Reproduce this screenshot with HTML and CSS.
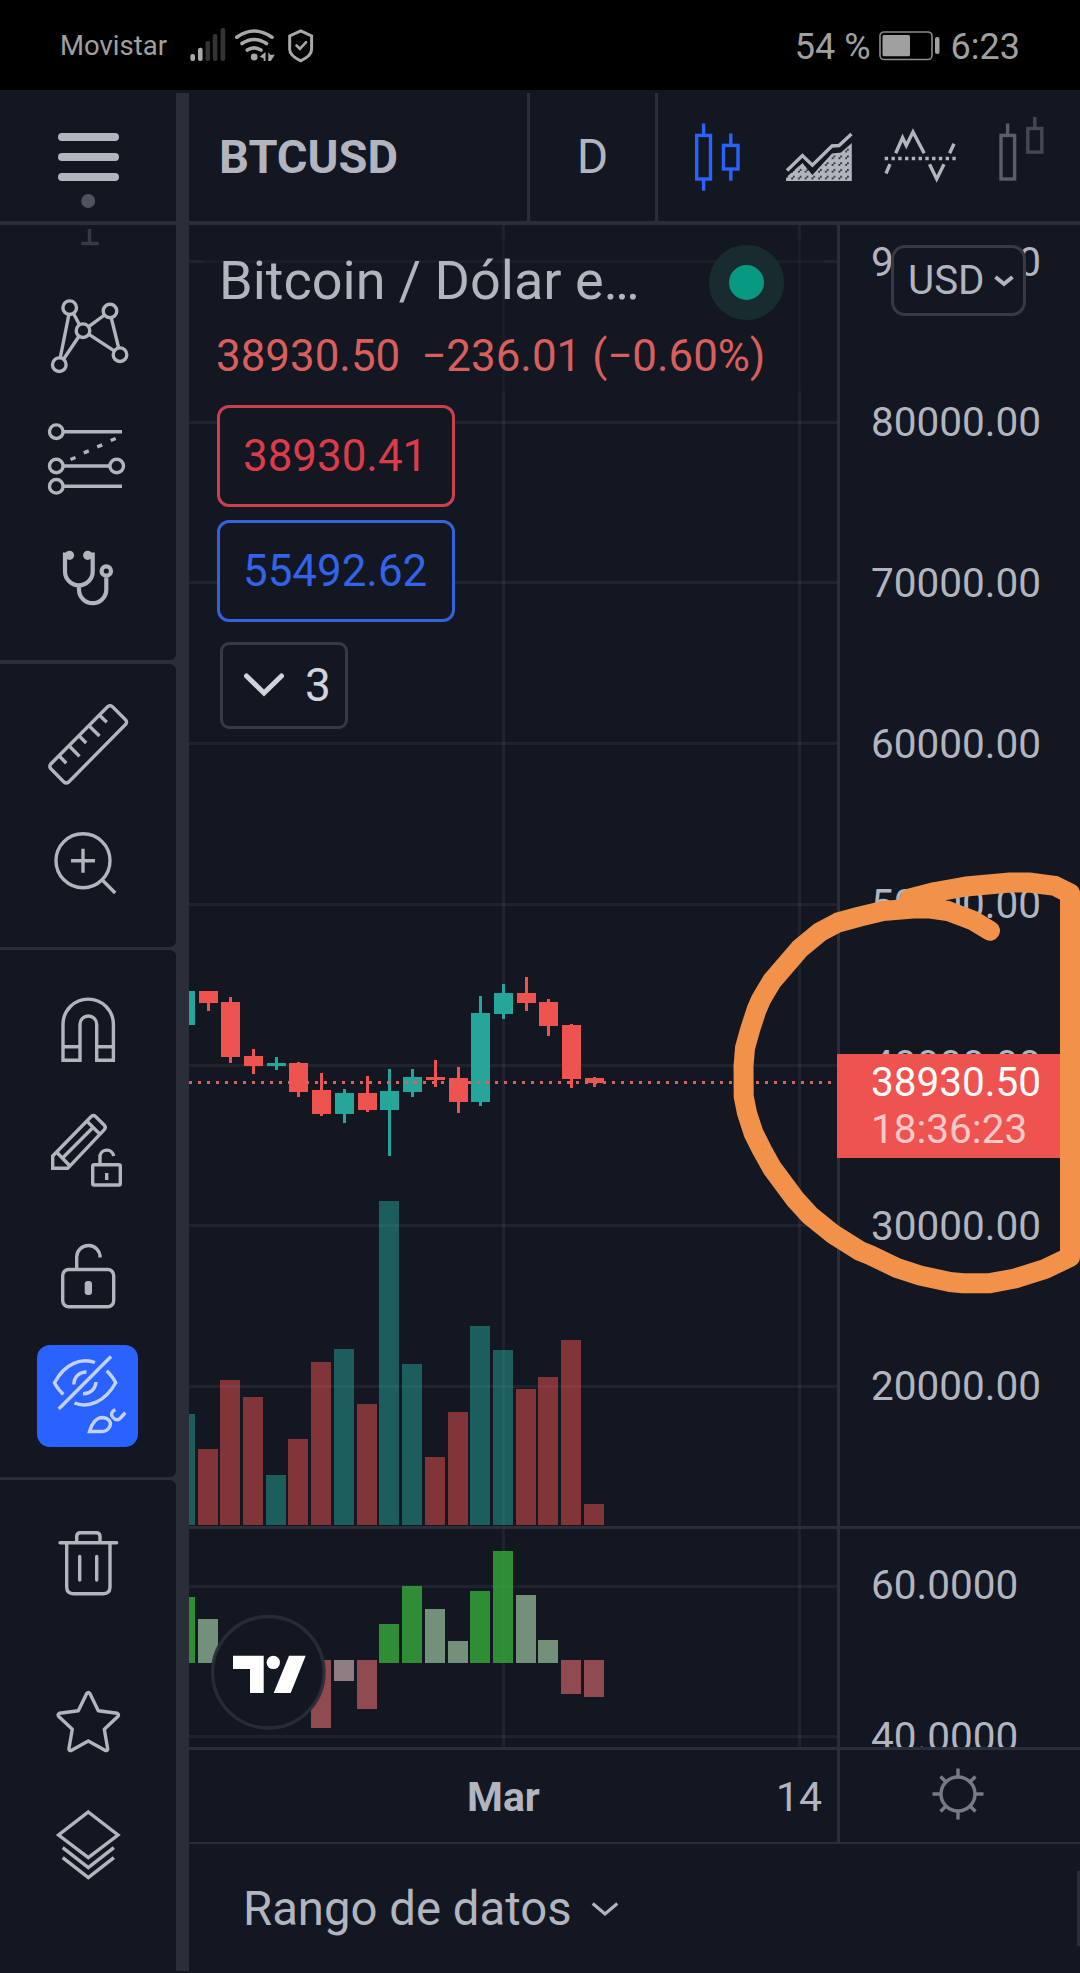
FILE: index.html
```html
<!DOCTYPE html>
<html lang="es">
<head>
    <meta charset="UTF-8">
    <meta name="viewport" content="width=device-width, initial-scale=1.0">
    <title>BTCUSD</title>
    <link rel="stylesheet" href="styles.css">
</head>
<body>
    <div class="status-bar">
        <span class="carrier">Movistar</span>
        <svg class="status-icons" width="126" height="36" viewBox="189 27 126 36">
            <rect x="190.4" y="54" width="4.6" height="7" rx="2" fill="#a8a8a8"/>
            <rect x="198" y="47.7" width="4.6" height="13.3" rx="2" fill="#a8a8a8"/>
            <rect x="205.5" y="41" width="4.6" height="20" rx="2" fill="#333"/>
            <rect x="212.8" y="34" width="4.6" height="27" rx="2" fill="#333"/>
            <rect x="220.6" y="28" width="4.6" height="33" rx="2" fill="#333"/>
            <g fill="none" stroke="#a8a8a8" stroke-width="3.6" stroke-linecap="round">
                <path d="M236.8 37.2Q254 24.8 272 37.2"/>
                <path d="M242 43.6Q254 35.4 266.5 43.6"/>
                <path d="M247.3 50Q254 45.6 261 50"/>
            </g>
            <circle cx="254.2" cy="57" r="3.4" fill="#a8a8a8"/>
            <path d="M265.5 52v9h-1.8v-2.5l-4-1.8zM268.3 52l2 2.8h4.5l-4 6.2h-2.5z" fill="#a8a8a8"/>
            <path d="M300.7 30.8L311.6 36v13.5c0 5.5-6 9-10.9 11.3C295.8 58.5 289.7 55 289.7 49.5V36z" fill="none" stroke="#a8a8a8" stroke-width="3"/>
            <path d="M296.5 45.5l3.4 3.3 6.2-6.6" fill="none" stroke="#a8a8a8" stroke-width="2.6" stroke-linecap="round"/>
        </svg>
        <span class="battery-level">54 %</span>
        <svg class="battery" width="61" height="30" viewBox="880 31 61 30">
            <rect x="881" y="32" width="52" height="27.5" rx="4" fill="none" stroke="#8d8d8d" stroke-width="1.6"/>
            <rect x="883.5" y="35" width="27.5" height="21.3" rx="1.5" fill="#a0a0a0"/>
            <rect x="936" y="37" width="4.5" height="17" rx="2" fill="#a0a0a0"/>
        </svg>
        <span class="clock">6:23</span>
    </div>

    <div class="app">
        <aside class="sidebar">
            <div class="menu">
                <svg width="176" height="128" viewBox="0 93 176 128">
                    <rect x="58" y="133" width="61" height="8" rx="4" fill="#b2b5be"/>
                    <rect x="58" y="153" width="61" height="8" rx="4" fill="#b2b5be"/>
                    <rect x="58" y="173" width="61" height="8" rx="4" fill="#b2b5be"/>
                    <circle cx="88.2" cy="201" r="7" fill="#50535e"/>
                </svg>
            </div>

            <div class="tools">
                <svg class="faded" width="176" height="55" viewBox="0 225 176 55">
                    <path d="M89.5 229v14M81.3 243.5h17.4"/>
                </svg>
                <svg width="176" height="120" viewBox="0 280 176 120">
                    <circle cx="69.7" cy="307.7" r="6.8"/>
                    <circle cx="110" cy="311" r="6.8"/>
                    <circle cx="83" cy="330.7" r="6.8"/>
                    <circle cx="59.3" cy="364.7" r="6.8"/>
                    <circle cx="120" cy="354.7" r="6.8"/>
                    <path d="M68.9 314.5L60.2 358M73.5 313.5l6 11.3M104.5 315L88.7 326.6M79 336.3L63.5 359.2M89 334.3l25.2 16.5M111.2 317.7l7.5 30.3"/>
                </svg>
                <svg width="176" height="120" viewBox="0 400 176 120">
                    <circle cx="56.3" cy="431.7" r="6.8"/>
                    <circle cx="56.3" cy="466" r="6.8"/>
                    <circle cx="116.7" cy="466" r="6.8"/>
                    <circle cx="56.3" cy="486.3" r="6.8"/>
                    <path d="M63 431.7h59M63 466h47M63 486.3h59"/>
                    <path d="M70.5 459.5l5-2M83.8 452.8l5-2M97.2 446.8l5-2M110.7 440.5l5-2"/>
                </svg>
                <svg width="176" height="140" viewBox="0 520 176 140">
                    <circle class="solid" cx="69.5" cy="555.3" r="4.6"/>
                    <circle class="solid" cx="87.7" cy="555.3" r="4.6"/>
                    <path class="thick" d="M69 554.5h-4v17a13.85 13.85 0 0 0 27.7 0v-17h-4M79 585.5v4a13.65 13.65 0 0 0 27.3 0v-12"/>
                    <circle class="thick" cx="106.3" cy="571" r="4.7"/>
                </svg>
            </div>

            <div class="tools">
                <svg width="176" height="136" viewBox="0 664 176 136">
                    <path d="M107.8 706.5q2.300-1.700 4.500 0l13.500 13.500q1.500 2 0 4.200L68.500 782.200q-2.200 1.700-4.400 0L50.600 768.500q-1.500-2.100 0-4.300z"/>
                    <path d="M59.3 756l7 7.300M69.300 746l10.200 10.400M79.300 736l6.900 7M89.300 726l10.200 10M99.800 715.500l7 6.700"/>
                </svg>
                <svg width="176" height="147" viewBox="0 800 176 147">
                    <circle cx="83" cy="860.7" r="27"/>
                    <path d="M71 860.7h24M83 848.7v24M102.300 880l12.900 13"/>
                </svg>
            </div>

            <div class="tools gap-small">
                <svg width="176" height="140" viewBox="0 950 176 140">
                    <path d="M63 1060.3v-36a25.2 25.2 0 0 1 50.4 0v36H96.7v-36a8.35 8.35 0 0 0-16.7 0v36zM63 1046.7h17M96.7 1046.7h16.7"/>
                </svg>
                <svg width="176" height="120" viewBox="0 1090 176 120">
                    <path d="M52.7 1168.3V1156l38.5-39.5q2.2-1.8 4.400 0l8.7 8.7q2 2.200 0 4.500l-36.600 38.600zM56.500 1152l13.700 14.300M63.300 1157.300l29.400-29.600M86.700 1121l13.300 13.300"/>
                    <rect x="92.7" y="1164.7" width="27.6" height="20.3" rx="1.5"/>
                    <path d="M100 1164v-8.5a7 7 0 0 1 13.700 0.500M106.700 1173v7"/>
                </svg>
                <svg width="176" height="135" viewBox="0 1210 176 135">
                    <rect x="62.7" y="1269.5" width="51" height="37.3" rx="6"/>
                    <path d="M76.7 1269v-12a11.7 11.7 0 0 1 23.4 0.5"/>
                    <rect class="solid" x="84.7" y="1281" width="7.3" height="14" rx="3"/>
                </svg>
                <button class="tool-active">
                    <svg width="101" height="102" viewBox="37 1345 101 102">
                        <path d="M63.3 1394.5Q57 1388 54.5 1382.700C65 1363 82 1357.500 95 1362.500M106.700 1370.700Q113 1377 115.700 1382.700C105 1402 88 1408.500 74.500 1403M111 1356.500L58.700 1409"/>
                        <path d="M73.8 1384.5C74 1377 79 1372 86.5 1372M96 1382C95.5 1389 90.5 1394 83 1393.8"/>
                        <path d="M89.5 1431.5C91.5 1424 96 1417.5 102.5 1417.5C109 1418 112 1422.5 109.5 1427Q107 1431.5 102 1431.5zM115.2 1409.5C111 1412 110.5 1414.5 113 1417.5C116 1421 118.5 1420 120.5 1418L125.3 1412.7"/>
                    </svg>
                </button>
            </div>

            <div class="tools gap-small last">
                <svg width="176" height="160" viewBox="0 1480 176 160">
                    <path stroke-linecap="round" d="M60 1542.7h56.7M76.7 1542v-5.5q0-3.8 3.8-3.8h15.7q3.8 0 3.8 3.8v5.5M66.7 1543v44q0 6.7 6.7 6.7h29.9q6.7 0 6.7-6.7v-44M79.7 1556.5v23.5M96.7 1556.5v23.5"/>
                </svg>
                <svg width="176" height="150" viewBox="0 1640 176 150">
                    <path stroke-linejoin="round" d="M86.7 1693.5q1.6-2 3.2 0l8.4 17.2 18.9 2.6q2 .9.9 2.9l-13.8 13.1 3.4 19.5q-.2 2.3-2.3 1.7L88.300 1741l-17.100 9.500q-2.100.6-2.300-1.700l3.400-19.500-13.800-13.100q-1.100-2 .9-2.900l18.900-2.600z"/>
                </svg>
                <svg width="176" height="181" viewBox="0 1790 176 181">
                    <path d="M88.3 1812l29.7 23-29.7 22.7L58.6 1835zM62.7 1847.700l25.600 20 25.600-20M62.700 1857.700l25.600 20 25.600-20"/>
                </svg>
            </div>
        </aside>

        <main class="main">
            <header class="toolbar">
                <div class="symbol">BTCUSD</div>
                <div class="interval">D</div>
                <svg class="toolbar-icons" width="422" height="128" viewBox="658 93 422 128">
                    <defs>
                        <pattern id="checker" x="786.2" y="177.6" width="6.76" height="6.76" patternUnits="userSpaceOnUse">
                            <rect width="3.4" height="3.4" fill="#b2b5be"/>
                            <rect x="3.38" y="3.38" width="3.4" height="3.4" fill="#b2b5be"/>
                        </pattern>
                    </defs>
                    <g stroke="#2962ff">
                        <rect x="696.7" y="135.4" width="13.8" height="43.6"/>
                        <rect x="723.5" y="145.4" width="14.5" height="23.6"/>
                        <path d="M703.6 123.5v12M703.6 179v11.7M730.8 133.5v12M730.8 169v11.7"/>
                    </g>
                    <path d="M787 170.5l15.4-15 10 9.7L832 146l7-.5 12.5-11.5"/>
                    <path d="M786 181v-3.5l16.5-14.5 9.9 12L832 153.5l9-1L851.8 143v38z" fill="url(#checker)" stroke="none"/>
                    <path d="M884.7 158.5h71" stroke-dasharray="3.4 3.37"/>
                    <path d="M895.7 153.3l6.900-15.600 3.700 7.800 6.700-13.500 11.200 21.300M929.500 164.200l7.200 14.800 7.300-14.800M886 173.500l4-9.300M949.600 153.300l4.400-9.600"/>
                    <g stroke="#5b5e68">
                        <rect x="1001" y="135.4" width="13.6" height="43.6"/>
                        <path d="M1007.6 123.5v12"/>
                    </g>
                    <g stroke="#454852">
                        <rect x="1027.8" y="128.5" width="14" height="23.6"/>
                        <path d="M1034.8 117v12"/>
                    </g>
                </svg>
            </header>

            <section class="chart">
                <div class="pane">
                    <svg id="price-pane" width="648" height="1301" viewBox="189 225 648 1301"></svg>
                    <div class="legend">
                        <div class="legend-head">
                            <div class="title-row">
                                <span class="title">Bitcoin / Dólar e…</span>
                                <span class="market-open"></span>
                            </div>
                            <div class="values"><span>38930.50</span><span>−236.01 (−0.60%)</span></div>
                        </div>
                        <div class="legend-buttons">
                            <button class="quote sell">38930.41</button>
                            <button class="quote buy">55492.62</button>
                            <button class="collapse">
                                <svg width="42" height="26" viewBox="0 0 42 26"><path d="M3.5 4l17.5 17L38.5 4"/></svg>
                                3
                            </button>
                        </div>
                    </div>
                </div>
                <div class="axis price-axis">
                    <ul class="prices">
                        <li>90000.00</li>
                        <li>80000.00</li>
                        <li>70000.00</li>
                        <li>60000.00</li>
                        <li>50000.00</li>
                        <li>40000.00</li>
                        <li>30000.00</li>
                        <li>20000.00</li>
                    </ul>
                    <button class="currency">
                        USD
                        <svg width="22" height="14" viewBox="0 0 22 14"><path d="M2.5 3l8.5 7 8.5-7"/></svg>
                    </button>
                    <div class="last-price">
                        <span>38930.50</span>
                        <span class="countdown">18:36:23</span>
                    </div>
                </div>

                <div class="pane pane-bottom">
                    <svg id="osc-pane" width="648" height="218" viewBox="189 1529 648 218"></svg>
                    <svg class="logo" width="116" height="116" viewBox="210 1614 116 116">
                        <circle cx="268.3" cy="1672.3" r="55.7" fill="#131722" stroke="#2a2e39" stroke-opacity=".9" stroke-width="3.5"/>
                        <g fill="#fff">
                            <path d="M233 1655.7h30.7v37.3H250v-24h-17zM289 1655.7h16.7L290.7 1693h-17z"/>
                            <circle cx="273.3" cy="1662.4" r="6.7"/>
                        </g>
                    </svg>
                </div>
                <div class="axis pane-bottom">
                    <ul class="prices osc">
                        <li>60.0000</li>
                        <li>40.0000</li>
                    </ul>
                </div>

                <div class="time-axis">
                    <span class="month">Mar</span>
                    <span class="day">14</span>
                </div>
                <div class="settings">
                    <svg width="54" height="54" viewBox="-27 -27 54 54">
                        <circle r="17"/>
                        <path d="M0-17v-8.5M0 17v8.5M-17 0h-8.5M17 0h8.5M-12-12l-5.5-5.5M12-12l5.5-5.5M-12 12l-5.5 5.5M12 12l5.5 5.5"/>
                    </svg>
                </div>
            </section>

            <footer class="range-bar">
                <span>Rango de datos</span>
                <svg width="30" height="18" viewBox="0 0 30 18"><path d="M2.7 3.5L15 14 27.3 3.5"/></svg>
                <i class="edge"></i>
            </footer>
        </main>
    </div>

    <!-- hand drawn marker -->
    <svg class="marker" width="400" height="480" viewBox="700 850 400 480">
        <path d="M990 930.7L973 920.5 948 911 930 908.5H913L883 911 860 916.5 838 922.5 820 932 800 948.5 772 981 761 999.5 756.5 1010 750 1030 745 1048 743.5 1066.5 743.7 1096.5 747 1113 753.5 1133 762 1150 772 1168 795 1199 810 1215.5 833 1234 860 1251 870 1255 897 1268 920 1275.5 950 1282 963 1283.2H990L1015 1278.5 1045 1269 1070 1257V893.5L1055 885.8 1029 882.5H1010L966 886.5 935 892 910 898.5"/>
    </svg>

    <script>
        // x, color, body top, body bottom, wick top, wick bottom, volume top
        const candles = [
            [176, "up", 991, 1025, 991, 1025, 1414],
            [199, "down", 991, 1003, 991, 1011, 1449],
            [221, "down", 1002, 1057, 997, 1063, 1380],
            [244, "down", 1056, 1066, 1049, 1074, 1397],
            [267, "up", 1063, 1066, 1057, 1070, 1475],
            [289, "down", 1063, 1092, 1062, 1097, 1439],
            [312, "down", 1090, 1114, 1073, 1116, 1362],
            [335, "up", 1093, 1114, 1089, 1123, 1349],
            [358, "down", 1093, 1110, 1076, 1112, 1404],
            [380, "up", 1091, 1110, 1069, 1156, 1201],
            [403, "up", 1077, 1092, 1069, 1097, 1364],
            [426, "down", 1077, 1080, 1060, 1087, 1457],
            [449, "down", 1078, 1102, 1067, 1113, 1412],
            [471, "up", 1013, 1102, 996, 1106, 1326],
            [494, "up", 993, 1014, 984, 1019, 1350],
            [517, "down", 993, 1003, 977, 1011, 1389],
            [539, "down", 1002, 1026, 999, 1036, 1377],
            [562, "down", 1025, 1079, 1024, 1088, 1340],
            [585, "down", 1078, 1083, 1077, 1087, 1504]
        ];

        // x, color, top, bottom
        const oscillator = [
            [175, "strong", 1597, 1663],
            [198, "weak", 1619, 1663],
            [311, "bear", 1660, 1728],
            [334, "bear-weak", 1660, 1681],
            [357, "bear", 1660, 1709],
            [379, "strong", 1624, 1663],
            [402, "strong", 1586, 1663],
            [425, "weak", 1609, 1663],
            [448, "weak", 1641, 1663],
            [470, "strong", 1591, 1663],
            [493, "strong", 1551, 1663],
            [516, "weak", 1595, 1663],
            [538, "weak", 1640, 1663],
            [561, "bear", 1660, 1694],
            [584, "bear", 1660, 1697]
        ];

        function rect(x, y, w, h, cls) {
            return `<rect class="${cls}" x="${x}" y="${y}" width="${w}" height="${h}"/>`;
        }

        function grid(rows, top, height) {
            let out = "";
            rows.forEach((y) => { out += rect(189, y, 648, 3, "grid"); });
            [502, 798].forEach((x) => { out += rect(x, top, 3, height, "grid"); });
            return out;
        }

        let price = grid([260, 421, 581, 742, 903, 1064, 1224, 1385], 225, 1301);
        candles.forEach(([x, dir, top, bottom, high, low, vol]) => {
            price += rect(x - 1, vol, 20, 1525 - vol, "vol-" + dir);
            price += rect(x + 8, high, 3, low - high, dir);
            price += rect(x, top, 19, bottom - top, dir);
        });
        price += `<path class="price-line" d="M189 1082.5H833"/>`;
        document.getElementById("price-pane").innerHTML = price;

        let osc = grid([1585, 1735], 1529, 218);
        oscillator.forEach(([x, cls, top, bottom]) => {
            osc += rect(x, top, 20, bottom - top, cls);
        });
        document.getElementById("osc-pane").innerHTML = osc;
    </script>
</body>
</html>
```
FILE: styles.css
```css
* {
    box-sizing: border-box;
}
body {
    margin: 0;
    width: 1080px;
    height: 1973px;
    overflow: hidden;
    position: relative;
    background-color: #131722;
    color: #b2b5be;
    font-family: Roboto, sans-serif;
}
svg {
    display: block;
    flex-shrink: 0;
}
button {
    display: flex;
    align-items: center;
    padding: 0;
    background-color: #131722;
    color: inherit;
    font-family: inherit;
    border: none;
}

/* phone status bar */
.status-bar {
    display: flex;
    align-items: center;
    height: 90px;
    padding: 0 60px;
    background-color: #000;
    color: #a0a0a0;
    font-size: 36px;
}
.carrier {
    width: 129px;
    padding-top: 1px;
    font-size: 27.5px;
}
.battery-level {
    margin-left: auto;
    padding-top: 3px;
    white-space: nowrap;
}
.battery {
    margin: 1px 11px 0 8px;
}
.clock {
    padding-top: 3px;
}

.app {
    display: flex;
    height: 1881px;
    padding-top: 3px;
}

/* drawing tools */
.sidebar {
    width: 189px;
    height: 1878px;
    padding-right: 13px;
    background-color: #2a2e39;
}
.menu {
    height: 128px;
    background-color: #131722;
}
.tools {
    margin-top: 4px;
    background-color: #131722;
    border-radius: 0 6px 6px 0;
}
.tools.gap-small {
    margin-top: 3px;
}
.tools:nth-child(2) {
    border-radius: 0 0 6px 0;
}
.tools:nth-child(4) {
    padding-bottom: 30px;
}
.tools.last {
    border-radius: 0 6px 0 0;
}
.tools svg {
    fill: none;
    stroke: #b2b5be;
    stroke-width: 3.4px;
}
.tools .faded {
    stroke: #363a45;
}
.tools .solid {
    fill: #b2b5be;
    stroke: none;
}
.tools .thick {
    stroke-width: 4.2px;
}
.tool-active {
    width: 101px;
    height: 102px;
    margin-left: 37px;
    border-radius: 13px;
    background-color: #2962ff;
}
.tools .tool-active svg {
    stroke: #c3d2ff;
}

.main {
    width: 891px;
}
.toolbar {
    display: flex;
    height: 132px;
    border-bottom: 4px solid #2a2e39;
    font-size: 48px;
    line-height: 127px;
}
.symbol {
    width: 341px;
    padding-left: 30px;
    border-right: 3px solid #2a2e39;
    font-size: 47px;
    font-weight: bold;
}
.interval {
    width: 128px;
    border-right: 3px solid #2a2e39;
    text-align: center;
}
.toolbar-icons {
    fill: none;
    stroke: #b2b5be;
    stroke-width: 3.4px;
}

/* chart panes and scales */
.chart {
    display: grid;
    grid-template-columns: 648px 243px;
    grid-template-rows: 1301px 221px 97px;
}
.pane, .axis {
    position: relative;
    overflow: hidden;
}
.axis, .settings {
    border-left: 3px solid #2a2e39;
}
.pane-bottom {
    border-top: 3px solid #2a2e39;
}
.grid {
    fill: #b2b5be;
    fill-opacity: 0.08;
}
.up {
    fill: #26a69a;
}
.down {
    fill: #ef5350;
}
.vol-up {
    fill: rgba(38, 166, 154, 0.5);
}
.vol-down {
    fill: rgba(239, 83, 80, 0.5);
}
.strong {
    fill: rgba(53, 163, 56, 0.85);
}
.weak {
    fill: rgba(133, 166, 138, 0.85);
}
.bear {
    fill: rgba(167, 85, 89, 0.85);
}
.bear-weak {
    fill: rgba(167, 143, 149, 0.85);
}
.price-line {
    stroke: #d9625f;
    stroke-width: 3px;
    stroke-dasharray: 3 6;
}
.logo {
    position: absolute;
    left: 21px;
    top: 85px;
}

/* legend lies over the price pane */
.legend {
    position: absolute;
    left: 14px;
    top: 14px;
}
.legend-head {
    width: 621px;
    height: 152px;
    padding-top: 6px;
    background-color: rgba(19, 23, 34, 0.5);
}
.title-row {
    display: flex;
    align-items: center;
    height: 75px;
    padding-left: 16px;
}
.title {
    width: 490px;
    font-size: 54px;
    padding-bottom: 4px;
}
.market-open {
    width: 75px;
    height: 75px;
    border: 20px solid #182c30;
    border-radius: 50%;
    background-color: #089981;
}
.values {
    display: flex;
    gap: 21px;
    padding-left: 13px;
    color: #d95f5c;
    font-size: 43.9px;
    line-height: 72px;
    white-space: nowrap;
}
.legend-buttons {
    width: 279px;
    padding: 14px 0 0 14px;
}
.quote {
    width: 238px;
    height: 102px;
    margin-bottom: 13px;
    padding: 0 0 1px 23px;
    border: 3px solid #c9414f;
    border-radius: 12px;
    color: #dc3c4a;
    font-size: 43.9px;
}
.buy {
    border-color: #3562d6;
    color: #3263ea;
}
.collapse {
    gap: 20px;
    width: 128px;
    height: 87px;
    margin: 20px 0 0 3px;
    padding: 0 0 2px 20px;
    border: 3px solid #363a45;
    border-radius: 9px;
    color: #d1d4dc;
    font-size: 46px;
}
.collapse svg {
    fill: none;
    stroke: #d1d4dc;
    stroke-width: 5px;
    stroke-linecap: round;
}

.prices {
    margin: -43.5px 0 0;
    padding: 0 0 0 31px;
    list-style: none;
    font-size: 40.5px;
}
.prices li {
    height: 160.7px;
    line-height: 160.7px;
}
.prices.osc {
    margin-top: -20px;
}
.prices.osc li {
    height: 152px;
    line-height: 152px;
}
/* inset line instead of a border, so the price tag can cover it */
.price-axis {
    padding-left: 3px;
    border-left: none;
    box-shadow: inset 3px 0 #2a2e39;
}
.currency {
    position: absolute;
    left: 54px;
    top: 20px;
    gap: 8px;
    width: 135px;
    height: 71px;
    padding-left: 14px;
    border: 3px solid #363a45;
    border-radius: 14px;
    font-size: 40.3px;
}
.currency svg {
    fill: none;
    stroke: #b2b5be;
    stroke-width: 4px;
}
.last-price {
    position: absolute;
    left: 0;
    top: 829px;
    width: 226px;
    height: 104px;
    padding: 5px 0 0 34px;
    border-radius: 0 3px 3px 0;
    background-color: #ef5350;
    color: #fff;
    font-size: 40.5px;
    line-height: 47px;
}
.last-price span {
    display: block;
}
.last-price .countdown {
    color: rgba(255, 255, 255, 0.7);
}

.time-axis, .settings {
    border-top: 3px solid #2a2e39;
    border-bottom: 2px solid #2a2e39;
}
.time-axis {
    display: flex;
    font-size: 41px;
    line-height: 94px;
}
.month {
    width: 40px;
    margin-left: 278px;
    font-weight: bold;
}
.day {
    margin-left: 269px;
}
.settings {
    padding: 17px 0 0 91px;
}
.settings svg {
    fill: none;
    stroke: #787b86;
    stroke-width: 3.4px;
}

.range-bar {
    display: flex;
    align-items: center;
    height: 129px;
    padding-left: 54px;
    font-size: 47.3px;
}
.range-bar svg {
    margin-left: 18px;
    fill: none;
    stroke: #b2b5be;
    stroke-width: 3.2px;
}
.edge {
    width: 3px;
    height: 75px;
    margin-left: auto;
    background-color: #2a2e39;
}

.marker {
    position: absolute;
    left: 700px;
    top: 850px;
    fill: none;
    stroke: #f2924a;
    stroke-width: 20px;
    stroke-linecap: round;
    stroke-linejoin: round;
}
```
